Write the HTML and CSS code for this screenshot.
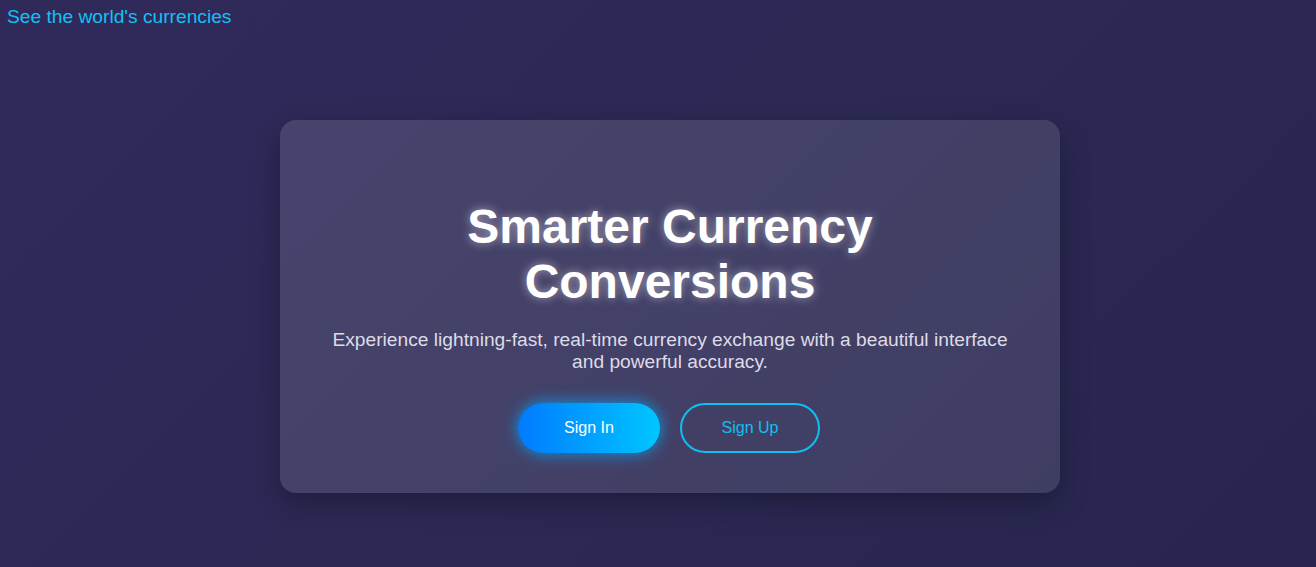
FILE: index.html
```html
<!DOCTYPE html>
<html lang="en">
<head>
<meta charset="utf-8">
<title>Smarter Currency Conversions</title>
<link rel="stylesheet" href="styles.css">
</head>
<body>
  <a class="top-link" href="#">See the world's currencies</a>
  <main class="stage">
    <section class="card">
      <h1 class="title">Smarter Currency Conversions</h1>
      <p class="lead">Experience lightning-fast, real-time currency exchange with a beautiful interface and powerful accuracy.</p>
      <div class="actions">
        <a class="btn btn-primary" href="#">Sign In</a>
        <a class="btn btn-outline" href="#">Sign Up</a>
      </div>
    </section>
  </main>
</body>
</html>
```
FILE: styles.css
```css
html, body {
  margin: 0;
  padding: 0;
  height: 100%;
}
body {
  font-family: "Liberation Sans", Arial, sans-serif;
  background: linear-gradient(135deg, #302a5b 0%, #2c2955 50%, #28264f 100%);
  color: #fff;
  overflow: hidden;
}
.top-link {
  display: inline-block;
  margin: 6px 0 0 7px;
  font-size: 19.2px;
  line-height: 22px;
  color: #13c0f5;
  text-decoration: none;
}
.stage {
  display: flex;
  justify-content: center;
  padding: 92px 0 0 24px;
}
.card {
  width: 780px;
  box-sizing: border-box;
  padding: 79px 48px 40px;
  border-radius: 16px;
  background: linear-gradient(135deg, rgba(255,255,255,0.12), rgba(255,255,255,0.1));
  box-shadow: 0 10px 30px rgba(0,0,0,0.3);
  text-align: center;
}
.title {
  margin: 0 auto;
  font-size: 48px;
  line-height: 55px;
  font-weight: 700;
  color: #fff;
  text-shadow: 0 0 10px rgba(255,255,255,0.5);
}
.lead {
  margin: 20px 0 0;
  font-size: 19.2px;
  line-height: 22px;
  color: #dedbe8;
}
.actions {
  display: flex;
  justify-content: center;
  gap: 20px;
  margin: 30px 2px 0 0;
}
.btn {
  display: flex;
  align-items: center;
  justify-content: center;
  box-sizing: border-box;
  height: 50px;
  border-radius: 25px;
  font-size: 16px;
  text-decoration: none;
}
.btn-primary {
  width: 142px;
  color: #fff;
  background: linear-gradient(90deg, #007bff, #00c6ff);
  box-shadow: 0 0 16px rgba(0,170,255,0.85);
}
.btn-outline {
  width: 140px;
  color: #10bff2;
  border: 2px solid #10bff2;
}
```
